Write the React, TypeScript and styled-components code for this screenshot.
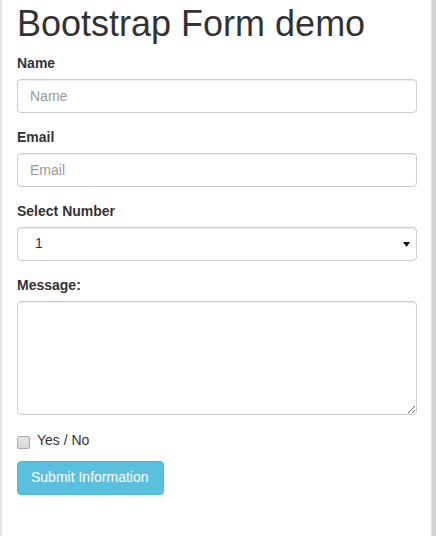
import React from 'react';
import styled, { createGlobalStyle } from "styled-components";

const GlobalStyle = createGlobalStyle`
  * { box-sizing: border-box; }
  html, body {
    margin: 0;
    padding: 0;
    background: #fff;
  }
  body {
    font-family: "Liberation Sans", Arial, Helvetica, sans-serif;
    font-size: 14px;
    line-height: 1.42857;
    color: #333;
  }
`;

const App = () => {
  return (
    <>
      <GlobalStyle />
      <Frame>
        <Title>Bootstrap Form demo</Title>
        <form onSubmit={(e) => e.preventDefault()}>
          <Group>
            <Label htmlFor="name">Name</Label>
            <Input id="name" type="text" placeholder="Name" />
          </Group>
          <Group>
            <Label htmlFor="email">Email</Label>
            <Input id="email" type="email" placeholder="Email" />
          </Group>
          <Group>
            <Label htmlFor="number">Select Number</Label>
            <SelectWrap>
              <Select id="number" defaultValue="1">
                <option>1</option>
                <option>2</option>
                <option>3</option>
                <option>4</option>
                <option>5</option>
              </Select>
              <Arrow width="7" height="5" viewBox="0 0 7 5">
                <path d="M0 0 L7 0 L3.5 5 Z" fill="#111" />
              </Arrow>
            </SelectWrap>
          </Group>
          <Group>
            <Label htmlFor="message">Message:</Label>
            <TextArea id="message" rows={5} />
          </Group>
          <CheckRow>
            <CheckLabel>
              <Check type="checkbox" />
              Yes / No
            </CheckLabel>
          </CheckRow>
          <Button type="submit">Submit Information</Button>
        </form>
      </Frame>
    </>
  )
}

export default App;

const Frame = styled.div`
  min-height: 536px;
  padding: 4px 15px 20px;
  border-left: 2px solid #e2e2e2;
  border-right: 4px solid #d4d4d4;
  box-shadow: inset -1px 0 0 #e6e6e6;
`;

const Title = styled.h1`
  font-size: 36px;
  font-weight: 500;
  line-height: 1.1;
  margin: 0 0 10px;
  color: #333;
`;

const Group = styled.div`
  margin-bottom: 15px;
`;

const Label = styled.label`
  display: inline-block;
  max-width: 100%;
  margin-bottom: 5px;
  font-weight: bold;
`;

const fieldCss = `
  display: block;
  width: 100%;
  height: 34px;
  padding: 6px 12px;
  font-family: "Liberation Sans", Arial, Helvetica, sans-serif;
  font-size: 14px;
  line-height: 1.42857;
  color: #555;
  background-color: #fff;
  border: 1px solid #ccc;
  border-radius: 4px;
  box-shadow: inset 0 1px 1px rgba(0, 0, 0, 0.075);
  outline: none;

  &::placeholder {
    color: #999;
  }
`;

const Input = styled.input`
  ${fieldCss}
`;

const SelectWrap = styled.div`
  position: relative;
`;

const Select = styled.select`
  ${fieldCss}
  appearance: none;
  padding-left: 17px;
  color: #333;
`;

const Arrow = styled.svg`
  position: absolute;
  right: 7px;
  top: 15px;
  pointer-events: none;
`;

const TextArea = styled.textarea`
  ${fieldCss}
  height: 114px;
  resize: vertical;
`;

const CheckRow = styled.div`
  margin: 10px 0;
  padding-top: 1px;
`;

const CheckLabel = styled.label`
  display: block;
  min-height: 20px;
  padding-left: 20px;
  font-weight: normal;
  cursor: pointer;
`;

const Check = styled.input`
  appearance: none;
  position: relative;
  float: left;
  width: 13px;
  height: 13px;
  margin: 5px 0 0 -20px;
  background: linear-gradient(#e4e4e4, #d8d8d8);
  border: 1px solid #a9a9a9;
  border-radius: 2px;

  &:checked::after {
    content: "";
    position: absolute;
    left: 3px;
    top: 0px;
    width: 3px;
    height: 7px;
    border: solid #333;
    border-width: 0 2px 2px 0;
    transform: rotate(45deg);
  }
`;

const Button = styled.button`
  display: inline-block;
  height: 34px;
  padding: 6px 14px 6px 13px;
  font-family: "Liberation Sans", Arial, Helvetica, sans-serif;
  font-size: 14px;
  line-height: 1.42857;
  color: #fff;
  background-color: #5bc0de;
  border: 1px solid #46b8da;
  border-radius: 4px;
  cursor: pointer;
`;
